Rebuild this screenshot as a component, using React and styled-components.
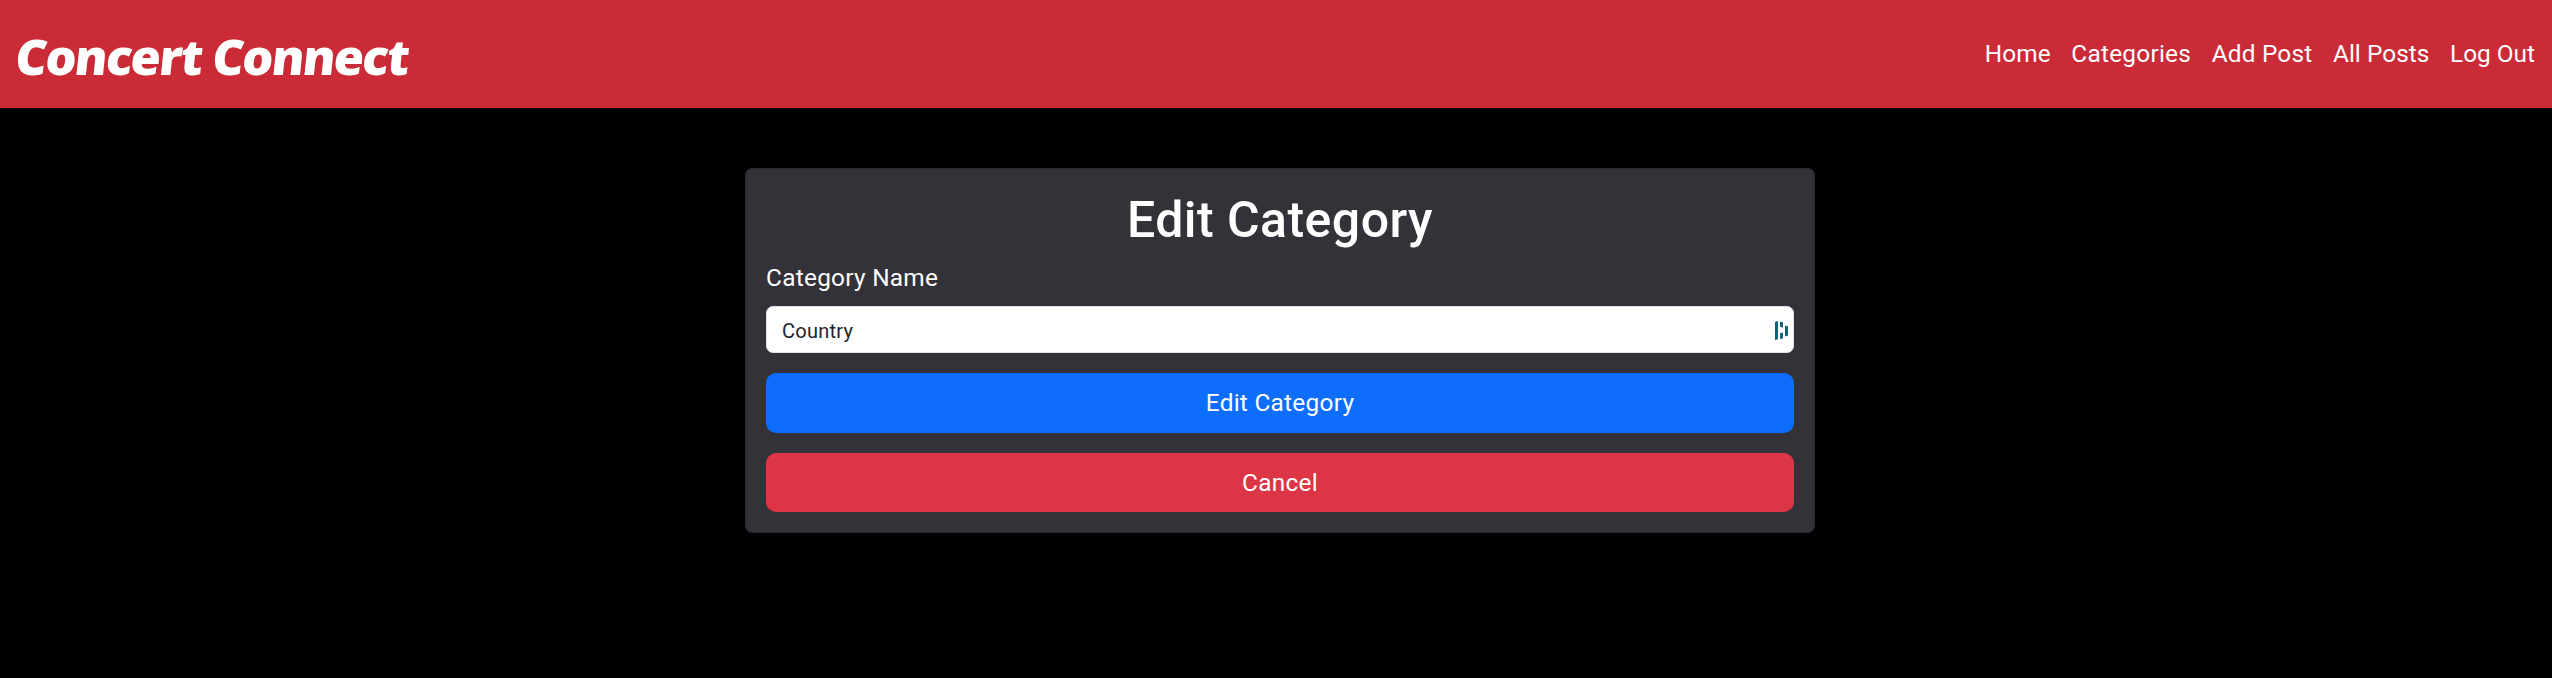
import React from "react";
import styled, { createGlobalStyle } from "styled-components";

const GlobalStyle = createGlobalStyle`
  *, *::before, *::after { box-sizing: border-box; }
  body {
    margin: 0;
    background: #000103;
    color: #fff;
    font-family: Roboto, "Open Sans", sans-serif;
    font-size: 24.4px;
    line-height: 36px;
    letter-spacing: 0.27px;
  }
`;

const Header = styled.header`
  display: flex;
  align-items: center;
  justify-content: space-between;
  height: 108px;
  padding: 0 17px 0 16px;
  background: #cb2a37;
`;

const Brand = styled.a`
  padding-top: 3px;
  font-family: "Open Sans", sans-serif;
  font-size: 49px;
  font-weight: 800;
  line-height: 60px;
  letter-spacing: -1.75px;
  white-space: nowrap;
  color: #fff;
  transform: skewX(-6deg);
`;

const Nav = styled.nav`
  display: flex;
  gap: 20.5px;
`;

const NavLink = styled.a`
  color: #fff;
  white-space: nowrap;
  letter-spacing: ${(p) => p.$tracking}px;
`;

const Main = styled.main`
  padding: 60px 0 0 745px;
`;

const Card = styled.form`
  display: flex;
  flex-direction: column;
  width: 1070px;
  height: 365px;
  padding: 20px;
  background: #333238;
  border: 1px solid #2b2a2f;
  border-radius: 7px;
`;

const Title = styled.h1`
  margin: 1px 0 10px;
  font-size: 50px;
  font-weight: 500;
  line-height: 60px;
  letter-spacing: 0.45px;
  text-align: center;
`;

const Label = styled.label`
  margin: 0 0 10px;
`;

const Field = styled.div`
  display: flex;
  flex: none;
  align-items: center;
  height: 47px;
  margin-bottom: 20px;
  padding: 2px 5px 0 15px;
  background: #fff;
  border: 1px solid #dee2e6;
  border-radius: 7px;
`;

const Input = styled.input`
  flex: 1;
  min-width: 0;
  padding: 0;
  border: 0;
  outline: 0;
  background: transparent;
  color: #212529;
  font: 400 20px/30px Roboto, sans-serif;
  letter-spacing: 0.25px;
`;

const Button = styled.button`
  flex: none;
  height: ${(p) => p.$height}px;
  margin: 0 0 20px;
  padding: 0;
  border: 0;
  border-radius: 10px;
  background: ${(p) => p.$color};
  color: #fff;
  font: inherit;
  letter-spacing: inherit;
`;

const links = [
  ["Home", 0.1],
  ["Categories", 0.24],
  ["Add Post", 0.2],
  ["All Posts", 0.05],
  ["Log Out", 0],
];

function VaultIcon() {
  return (
    <svg width="13" height="19" viewBox="0 0 13 19" fill="#0e6378" aria-hidden="true">
      <path d="M0 .8 3 0v18.2L0 19ZM5 .5l3 1v5.2l-3-1ZM5 12.3l3-.9v5.9l-3 1ZM10 4.5l3 1v9l-3 1Z" />
    </svg>
  );
}

export default function App() {
  return (
    <>
      <GlobalStyle />
      <Header>
        <Brand>Concert Connect</Brand>
        <Nav>
          {links.map(([name, tracking]) => (
            <NavLink key={name} $tracking={tracking}>{name}</NavLink>
          ))}
        </Nav>
      </Header>
      <Main>
        <Card>
          <Title>Edit Category</Title>
          <Label htmlFor="name">Category Name</Label>
          <Field>
            <Input id="name" defaultValue="Country" />
            <VaultIcon />
          </Field>
          <Button type="button" $color="#0d6efd" $height={60}>Edit Category</Button>
          <Button type="button" $color="#dc3545" $height={59}>Cancel</Button>
        </Card>
      </Main>
    </>
  );
}
